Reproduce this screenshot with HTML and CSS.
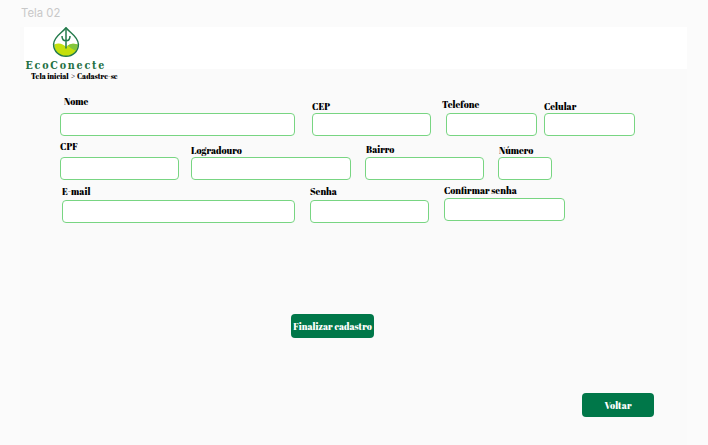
FILE: index.html
```html
<!DOCTYPE html>
<html lang="pt-BR">
<head>
<meta charset="utf-8">
<title>EcoConecte – Cadastre-se</title>
<link rel="stylesheet" href="styles.css">
</head>
<body>
<div class="frame-title">Tela 02</div>
<main class="frame">
  <header class="header">
    <div class="logo">
      <svg class="logo-mark" viewBox="0 0 28 32" width="28" height="32">
        <path d="M2.3 17.600C7 15.300 11 17 14 20c4-3.700 8-3.800 11.700-2.400C25.700 25 20.500 29.200 14 29.200S2.300 25 2.300 17.600Z" fill="#c3e00c"/>
        <path d="M15.500 18.800c3.500-2.500 7-2.400 10.200-1.200-.2 2.400-1 4.300-2.400 6C20.500 22.500 18.500 20.500 15.500 18.800Z" fill="#82c63d"/>
        <path d="M14 .8C10.500 5.500 1.600 9.500 1.600 17.300 1.600 24.500 7.300 29.300 14 29.300S26.400 24.500 26.400 17.300C26.400 9.500 17.500 5.500 14 .8Z" fill="none" stroke="#237a4b" stroke-width="1.500"/>
        <path d="M14 1v20.500M10 9c0 3.300 1 4.800 4 4.800s4-1.500 4-4.800" fill="none" stroke="#237a4b" stroke-width="1.500"/>
      </svg>
      <div class="logo-name">EcoConecte</div>
    </div>
  </header>
  <nav class="breadcrumb"><span class="home">Tela inicial</span><span class="sep">&gt;</span><span class="here">Cadastre-se</span></nav>
  <form class="form">
    <div class="row row-1">
      <div class="field nome"><label for="nome">Nome</label><input id="nome"></div>
      <div class="field cep"><label for="cep">CEP</label><input id="cep"></div>
      <div class="field telefone"><label for="telefone">Telefone</label><input id="telefone"></div>
      <div class="field celular"><label for="celular">Celular</label><input id="celular"></div>
    </div>
    <div class="row row-2">
      <div class="field cpf"><label for="cpf">CPF</label><input id="cpf"></div>
      <div class="field logradouro"><label for="logradouro">Logradouro</label><input id="logradouro"></div>
      <div class="field bairro"><label for="bairro">Bairro</label><input id="bairro"></div>
      <div class="field numero"><label for="numero">Número</label><input id="numero"></div>
    </div>
    <div class="row row-3">
      <div class="field email"><label for="email">E-mail</label><input id="email"></div>
      <div class="field senha"><label for="senha">Senha</label><input id="senha" type="password"></div>
      <div class="field confirmar"><label for="confirmar">Confirmar senha</label><input id="confirmar" type="password"></div>
    </div>
    <button class="button finish" type="button">Finalizar cadastro</button>
    <button class="button back" type="button">Voltar</button>
  </form>
</main>
</body>
</html>
```
FILE: styles.css
```css
* { box-sizing: border-box; }

body {
  margin: 0;
  height: 445px;
  overflow: hidden;
  background: #fbfbfb;
  color: #000;
  font: 9.300px/12px "Abril Fatface", "Liberation Serif", serif;
}

.frame-title {
  height: 27px;
  padding: 6px 0 0 21px;
  color: #c8c8c8;
  font: 11.300px/14px Inter, sans-serif;
}

.frame {
  width: 667px;
  height: 418px;
  margin-left: 20px;
  background: #fafafa;
}

.header {
  height: 42px;
  margin-left: 4px;
  background: #fff;
}

.logo { width: 84px; }

.logo-mark {
  display: block;
  margin-left: 28px;
}

.logo-name {
  margin-left: 1.500px;
  color: #237043;
  font: bold 10.600px/13px "DejaVu Serif Condensed", "DejaVu Serif", serif;
  letter-spacing: 1.800px;
  white-space: nowrap;
}

.breadcrumb {
  display: flex;
  height: 14px;
  padding: 2px 0 0 11px;
  font-size: 7.400px;
  line-height: 11px;
  white-space: nowrap;
}

.home { width: 40px; }
.sep { width: 6px; font-family: "Liberation Serif", serif; }

.form {
  display: flex;
  flex-direction: column;
  padding-left: 40px;
}

.row { display: flex; align-items: flex-end; }
.row-1 { height: 53px; }
.row-2 { height: 44px; }
.row-3 { height: 43px; align-items: flex-start; padding-top: 2px; }

.field { display: flex; flex-direction: column; }

.field label {
  margin-bottom: 0;
  white-space: nowrap;
}

.field input {
  width: 100%;
  height: 23px;
  padding: 0 6px;
  border: 1px solid #78d582;
  border-radius: 4px;
  background: #fff;
}

.nome { width: 235px; }
.nome label { margin: 0 0 5px 4px; }
.cep { width: 119px; margin-left: 17px; }
.telefone { width: 91px; margin-left: 15px; }
.telefone label { margin: 0 0 2px -4px; }
.celular { width: 91px; margin-left: 7px; }
.cpf { width: 119px; }
.cpf label { margin-bottom: 4px; }
.logradouro { width: 160px; margin-left: 12px; }
.bairro { width: 119px; margin-left: 14px; }
.bairro label { margin: 0 0 1px 1px; }
.numero { width: 54px; margin-left: 14px; }
.numero label { margin-left: 1px; }
.email { width: 233px; margin: 4px 0 0 2px; }
.email label { margin-bottom: 2px; }
.senha { width: 119px; margin: 4px 0 0 15px; }
.senha label { margin-bottom: 2px; }
.confirmar { width: 121px; margin: 3px 0 0 15px; }
.confirmar label { margin-bottom: 1px; }

.button {
  height: 24px;
  padding: 1px 0 0;
  border: 0;
  border-radius: 4px;
  background: #007749;
  color: #fff;
  font: inherit;
  white-space: nowrap;
}

.finish { width: 83px; margin: 91px 0 0 231px; }
.back { width: 72px; margin: 55px 0 0 522px; }
```
